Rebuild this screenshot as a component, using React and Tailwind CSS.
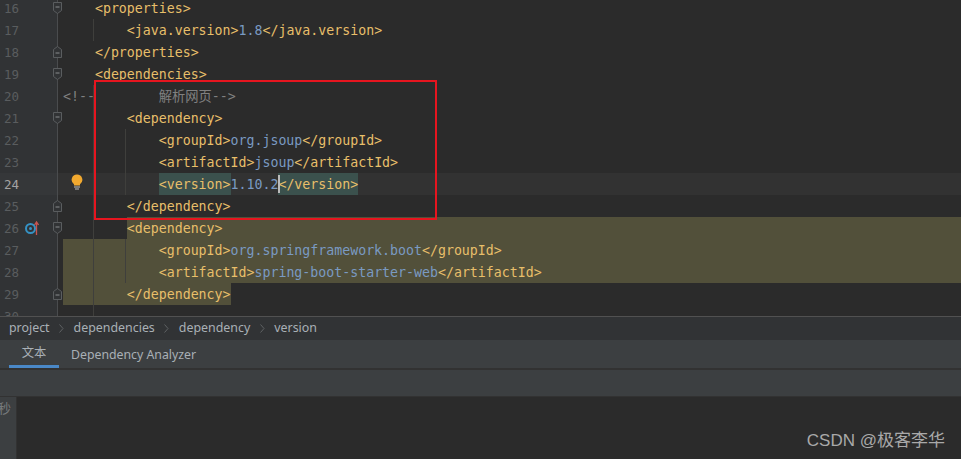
import React from "react";

const tag = "text-[#e8bf6a]";
const val = "text-[#7a9ac2]";

// fold marker in the gutter: open = pointing down, close = pointing up
const Fold = ({ type }) => (
  <svg width="11" height="14" viewBox="0 0 11 14" className="absolute left-[52px] top-[4px]">
    {type === "open" ? (
      <path d="M1.5 1.5h8v8l-4 3-4-3z" fill="#313335" stroke="#5a5d5f" />
    ) : (
      <path d="M1.5 12.5h8v-8l-4-3-4 3z" fill="#313335" stroke="#5a5d5f" />
    )}
    <path d={type === "open" ? "M3.5 6h4" : "M3.5 8h4"} stroke="#8a8d8f" />
  </svg>
);

const Bulb = () => (
  <svg width="12" height="16" viewBox="0 0 12 16" className="absolute left-[71px] top-[1px]">
    <path d="M6 0.5a5.3 5.3 0 0 0-3 9.7v1.3h6v-1.3a5.3 5.3 0 0 0-3-9.7z" fill="#f2a92f" />
    <path d="M3 13h6M4 15h4" stroke="#bdbdbd" strokeWidth="1.2" />
  </svg>
);

const BadgeIcon = () => (
  <svg width="14" height="16" viewBox="0 0 14 16" className="absolute left-[25px] top-[3px]">
    <circle cx="5.5" cy="8.5" r="4.5" fill="none" stroke="#3592c4" strokeWidth="2" />
    <circle cx="5.5" cy="8.5" r="1.5" fill="#3592c4" />
    <path d="M11.5 15V3M9.5 5l2-3 2 3" stroke="#c75450" strokeWidth="1.3" fill="none" />
  </svg>
);

const Row = ({ n, fold, active, hl, icon, guides, children }) => (
  <div className={`relative flex h-[22px] shrink-0 ${active ? "bg-[#323232]" : ""}`}>
    <div className={`w-[57px] shrink-0 pl-[4px] text-[12.5px] leading-[24px] ${active ? "bg-[#353739] text-[#a4a3a3]" : "bg-[#313335] text-[#5a5d5f]"}`}>
      {n}
    </div>
    <div className="w-[6px] shrink-0 border-l border-[#4a4c4e]" />
    {hl === "from" && <div className="absolute left-[127px] right-0 top-0 h-full bg-[#52503a]" />}
    {hl === "full" && <div className="absolute left-[63px] right-0 top-0 h-full bg-[#52503a]" />}
    {hl === "end" && <div className="absolute left-[63px] top-0 h-full w-[168px] bg-[#52503a]" />}
    {guides?.includes(93) && <div className="absolute left-[93px] top-0 h-full w-px bg-[#3f3f3c]" />}
    {guides?.includes(125) && <div className="absolute left-[125px] top-0 h-full w-px bg-[#3f3f3c]" />}
    {fold && <Fold type={fold} />}
    {icon === "bulb" && <Bulb />}
    {icon === "badge" && <BadgeIcon />}
    <div className="relative h-[22px] whitespace-pre text-[13.25px] leading-[24px]">{children}</div>
  </div>
);

const T = ({ children, mark }) => (
  <span className={`${tag} ${mark ? "inline-block h-[22px] bg-[#3b514d] align-top" : ""}`}>{children}</span>
);
const V = ({ children }) => <span className={val}>{children}</span>;

const Crumb = ({ children, last }) => (
  <>
    <span>{children}</span>
    {!last && (
      <svg width="5" height="9" viewBox="0 0 5 9" className="mx-[9.5px]">
        <path d="M0.5 0.5l3.5 4-3.5 4" fill="none" stroke="#5f6264" />
      </svg>
    )}
  </>
);

export default function App() {
  return (
    <div className="relative flex h-[459px] w-[961px] flex-col overflow-hidden bg-[#2b2b2b] font-['DejaVu_Sans_Mono','Noto_Sans_CJK_SC',monospace]">
      {/* editor */}
      <div className="flex h-[316px] shrink-0 flex-col overflow-hidden">
        <div className="-mt-[3px] flex flex-col">
          <Row n="16" fold="open">{"    "}<T>{"<properties>"}</T></Row>
          <Row n="17" guides={[93]}>{"        "}<T>{"<java.version>"}</T><V>1.8</V><T>{"</java.version>"}</T></Row>
          <Row n="18" fold="close">{"    "}<T>{"</properties>"}</T></Row>
          <Row n="19" fold="open">{"    "}<T>{"<dependencies>"}</T></Row>
          <Row n="20" guides={[93]}><span className="text-[#808080]">{"<!--"}{"        "}解析网页{"-->"}</span></Row>
          <Row n="21" fold="open" guides={[93]}>{"        "}<T>{"<dependency>"}</T></Row>
          <Row n="22" guides={[93, 125]}>{"            "}<T>{"<groupId>"}</T><V>org.jsoup</V><T>{"</groupId>"}</T></Row>
          <Row n="23" guides={[93, 125]}>{"            "}<T>{"<artifactId>"}</T><V>jsoup</V><T>{"</artifactId>"}</T></Row>
          <Row n="24" active icon="bulb" guides={[93, 125]}>
            {"            "}<T mark>{"<version>"}</T><V>1.10.2</V><T mark>{"</version>"}</T>
          </Row>
          <Row n="25" fold="close" guides={[93]}>{"        "}<T>{"</dependency>"}</T></Row>
          <Row n="26" fold="open" hl="from" icon="badge" guides={[93]}>{"        "}<T>{"<dependency>"}</T></Row>
          <Row n="27" hl="full" guides={[93, 125]}>{"            "}<T>{"<groupId>"}</T><V>org.springframework.boot</V><T>{"</groupId>"}</T></Row>
          <Row n="28" hl="full" guides={[93, 125]}>{"            "}<T>{"<artifactId>"}</T><V>spring-boot-starter-web</V><T>{"</artifactId>"}</T></Row>
          <Row n="29" fold="close" hl="end" guides={[93]}>{"        "}<T>{"</dependency>"}</T></Row>
          <Row n="30" guides={[93]} />
        </div>
      </div>

      {/* breadcrumbs */}
      <div className="flex h-[24px] shrink-0 items-center border-t border-[#515151] bg-[#313335] pl-[9px] font-['Noto_Sans','Noto_Sans_CJK_SC',sans-serif] text-[12.4px] text-[#a9b0b6]">
        <Crumb>project</Crumb>
        <Crumb>dependencies</Crumb>
        <Crumb>dependency</Crumb>
        <Crumb last>version</Crumb>
      </div>

      {/* tabs */}
      <div className="flex h-[30px] shrink-0 border-b-2 border-[#323232] bg-[#3c3f41] pl-[9px] font-['Noto_Sans','Noto_Sans_CJK_SC',sans-serif] text-[12.3px] text-[#a9b0b6]">
        <div className="flex w-[50px] items-center justify-center border-b-[3px] border-[#4a88c7] pt-[2px]">文本</div>
        <div className="flex items-center pl-[12px] pt-[2px]">Dependency Analyzer</div>
      </div>

      {/* toolbar */}
      <div className="h-[27px] shrink-0 border-b border-[#323232] bg-[#3c3f41]" />

      {/* console */}
      <div className="flex min-h-0 flex-1">
        <div className="w-[17px] shrink-0 overflow-hidden border-r border-[#323232] bg-[#3c3f41]">
          <div className="-ml-[2px] mt-[3px] font-['Noto_Sans_CJK_SC',sans-serif] text-[13px] leading-[16px] text-[#777a7c]">秒</div>
        </div>
        <div className="flex-1 bg-[#2b2b2b]" />
      </div>

      {/* annotation + watermark lie over the screenshot */}
      <div className="absolute left-[94px] top-[80px] h-[140px] w-[343px] border-2 border-[#e6151f]" />
      <div className="absolute right-[16px] top-[428px] font-['Liberation_Sans','Noto_Sans_CJK_SC',sans-serif] text-[17px] text-[#a9a9a9]">CSDN @极客李华</div>
      <div className="absolute left-[278px] top-[175px] h-[18px] w-[2px] bg-[#bbbbbb]" />
    </div>
  );
}
